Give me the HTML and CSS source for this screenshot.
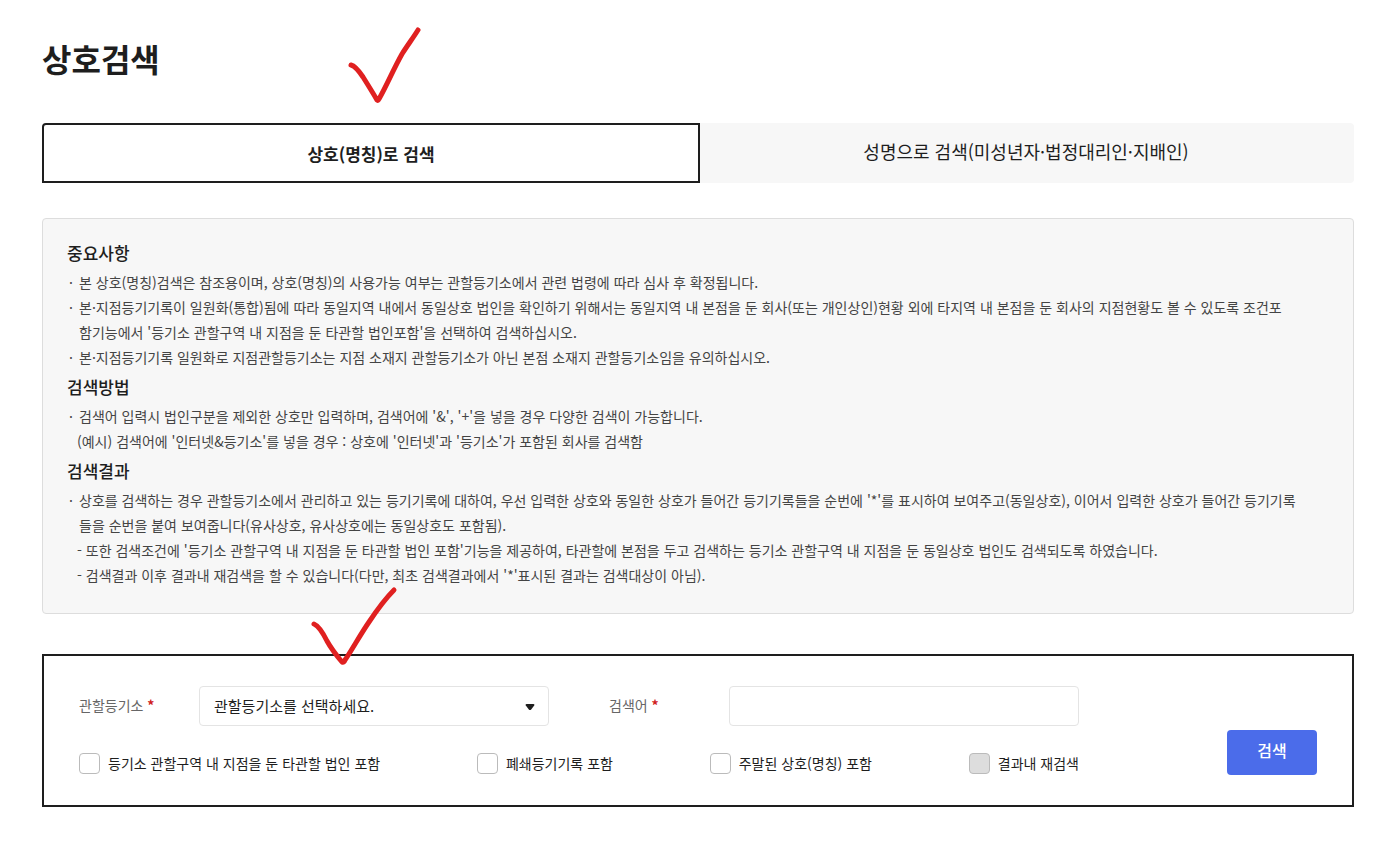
FILE: index.html
```html
<!DOCTYPE html>
<html lang="ko">
<head>
    <meta charset="UTF-8">
    <meta name="viewport" content="width=device-width, initial-scale=1.0">
    <title>상호검색</title>
    <link rel="stylesheet" href="styles.css">
</head>
<body>
    <main class="container">
        <h1>상호검색</h1>

        <div class="tabs">
            <button type="button" class="tab active">상호(명칭)로 검색</button>
            <button type="button" class="tab">성명으로 검색(미성년자·법정대리인·지배인)</button>
            <svg class="mark mark-tab" width="80" height="84" viewBox="0 0 80 84" aria-hidden="true">
                <path d="M6 40 C10 41 14 46 18 52 C23 60 28 68 32 75 Q33 76 34 74 C42 60 48 45 57 29 C62 21 68 13 73 5"/>
            </svg>
        </div>

        <section class="notice">
            <h2>중요사항</h2>
            <ul>
                <li>본 상호(명칭)검색은 참조용이며, 상호(명칭)의 사용가능 여부는 관할등기소에서 관련 법령에 따라 심사 후 확정됩니다.</li>
                <li>본·지점등기기록이 일원화(통합)됨에 따라 동일지역 내에서 동일상호 법인을 확인하기 위해서는 동일지역 내 본점을 둔 회사(또는 개인상인)현황 외에 타지역 내 본점을 둔 회사의 지점현황도 볼 수 있도록 조건포<br>함기능에서 '등기소 관할구역 내 지점을 둔 타관할 법인포함'을 선택하여 검색하십시오.</li>
                <li>본·지점등기기록 일원화로 지점관할등기소는 지점 소재지 관할등기소가 아닌 본점 소재지 관할등기소임을 유의하십시오.</li>
            </ul>
            <h2>검색방법</h2>
            <ul>
                <li>검색어 입력시 법인구분을 제외한 상호만 입력하며, 검색어에 '&amp;', '+'을 넣을 경우 다양한 검색이 가능합니다.</li>
                <li class="sub">(예시) 검색어에 '인터넷&amp;등기소'를 넣을 경우 : 상호에 '인터넷'과 '등기소'가 포함된 회사를 검색함</li>
            </ul>
            <h2>검색결과</h2>
            <ul>
                <li>상호를 검색하는 경우 관할등기소에서 관리하고 있는 등기기록에 대하여, 우선 입력한 상호와 동일한 상호가 들어간 등기기록들을 순번에 '*'를 표시하여 보여주고(동일상호), 이어서 입력한 상호가 들어간 등기기록<br>들을 순번을 붙여 보여줍니다(유사상호, 유사상호에는 동일상호도 포함됨).</li>
                <li class="sub">- 또한 검색조건에 '등기소 관할구역 내 지점을 둔 타관할 법인 포함'기능을 제공하여, 타관할에 본점을 두고 검색하는 등기소 관할구역 내 지점을 둔 동일상호 법인도 검색되도록 하였습니다.</li>
                <li class="sub">- 검색결과 이후 결과내 재검색을 할 수 있습니다(다만, 최초 검색결과에서 '*'표시된 결과는 검색대상이 아님).</li>
            </ul>
        </section>

        <form class="search-box">
            <div class="search-fields">
                <div class="field-row">
                    <div class="field">
                        <label for="office">관할등기소 <span class="required">*</span></label>
                        <div class="select-wrap">
                            <select id="office" name="office">
                                <option value="">관할등기소를 선택하세요.</option>
                            </select>
                            <svg class="arrow" width="10" height="8" viewBox="0 0 10 8" aria-hidden="true">
                                <path d="M1.500 1h7q1.500.3.700 1.500L6.200 6.500q-1.200 1-2.400 0L.8 2.500Q0 1.300 1.500 1z"/>
                            </svg>
                        </div>
                    </div>
                    <div class="field">
                        <label for="keyword">검색어 <span class="required">*</span></label>
                        <input type="text" id="keyword" name="keyword">
                    </div>
                </div>
                <div class="check-row">
                    <label class="check"><input type="checkbox" name="branch">등기소 관할구역 내 지점을 둔 타관할 법인 포함</label>
                    <label class="check"><input type="checkbox" name="closed">폐쇄등기기록 포함</label>
                    <label class="check"><input type="checkbox" name="cancelled">주말된 상호(명칭) 포함</label>
                    <label class="check"><input type="checkbox" name="within" disabled>결과내 재검색</label>
                </div>
            </div>
            <button type="submit" class="search-btn">검색</button>
            <svg class="mark mark-form" width="94" height="84" viewBox="0 0 94 84" aria-hidden="true">
                <path d="M6 39 C11 41 15 48 19 56 C24 65 29 71 34 77 Q36 78 37 75 C44 65 52 50 61 37 C69 25 77 14 86 5"/>
            </svg>
        </form>
    </main>
</body>
</html>
```
FILE: styles.css
```css
* {
    box-sizing: border-box;
}
body {
    margin: 0;
    background-color: #fff;
    color: #1e1e1e;
    font-family: "Noto Sans CJK KR", sans-serif;
    font-size: 14px;
}
button,
input,
select {
    font-family: inherit;
    color: inherit;
}
.container {
    padding: 34px 45px 45px 42px;
}
h1 {
    margin: 0 0 41px;
    font-size: 32px;
    line-height: 48px;
    font-weight: 700;
}

/* Tabs */
.tabs {
    position: relative;
    display: grid;
    grid-template-columns: 1fr 1fr;
    margin-bottom: 35px;
}
.tab {
    height: 60px;
    padding: 0 0 4px;
    border: 0;
    border-radius: 0 4px 4px 0;
    background-color: #f7f7f7;
    font-size: 18px;
    cursor: pointer;
}
.tab.active {
    margin-right: -2px;
    padding: 0;
    border: 2px solid #1e1e1e;
    border-radius: 4px 0 0 0;
    background-color: #fff;
    font-size: 17px;
    font-weight: 700;
    z-index: 1;
}

/* Notice */
.notice {
    margin-bottom: 40px;
    padding: 17px 24px 25px;
    border: 1px solid #ddd;
    border-radius: 4px;
    background-color: #f7f7f7;
}
.notice h2 {
    margin: 0;
    font-size: 17px;
    line-height: 34px;
    font-weight: 500;
}
.notice ul {
    margin: 0;
    padding: 0;
    list-style: none;
    color: #444;
    line-height: 25px;
}
.notice li {
    padding-left: 12px;
    text-indent: -10px;
}
.notice li::before {
    content: "·";
    display: inline-block;
    width: 10px;
    text-indent: 0;
}
.notice .sub {
    padding-left: 10px;
    text-indent: 0;
}
.notice .sub::before {
    display: none;
}

/* Search form */
.search-box {
    position: relative;
    display: flex;
    justify-content: space-between;
    padding: 30px 35px;
    border: 2px solid #1e1e1e;
}
.search-fields {
    flex: 0 1 1000px;
}
.field-row {
    display: grid;
    grid-template-columns: 1fr 1fr;
    gap: 60px;
    margin-bottom: 25px;
}
.field {
    display: grid;
    grid-template-columns: 120px 1fr;
    align-items: center;
}
.field label {
    padding-bottom: 2px;
    color: #666;
}
.required {
    color: #d02020;
    font-weight: 700;
}
.select-wrap {
    position: relative;
}
.field select,
.field input {
    width: 100%;
    height: 40px;
    padding: 0 14px 2px;
    border: 1px solid #e4e4e4;
    border-radius: 4px;
    background-color: #fff;
    font-size: 15px;
}
.field select {
    display: block;
    appearance: none;
}
.arrow {
    position: absolute;
    top: 17px;
    right: 14px;
    fill: #1e1e1e;
    pointer-events: none;
}
.check-row {
    display: flex;
    justify-content: space-between;
}
.check {
    display: flex;
    align-items: center;
    gap: 8px;
    line-height: 24px;
}
.check input {
    appearance: none;
    width: 21px;
    height: 21px;
    margin: 0;
    border: 1px solid #bbb;
    border-radius: 4px;
    background-color: #fff;
}
.check input:checked {
    background-color: #4b6cea;
}
.check input:disabled {
    background-color: #ddd;
}
.search-btn {
    align-self: flex-end;
    width: 90px;
    height: 45px;
    padding: 0 0 6px;
    border: 0;
    border-radius: 4px;
    background-color: #4b6cea;
    color: #fff;
    font-size: 16px;
    font-weight: 500;
    cursor: pointer;
}

/* Hand-drawn check marks */
.mark {
    position: absolute;
    z-index: 2;
    fill: none;
    stroke: #e02020;
    stroke-width: 5;
    stroke-linecap: round;
    stroke-linejoin: round;
    pointer-events: none;
}
.mark-tab {
    top: -98px;
    left: 303px;
}
.mark-form {
    top: -71px;
    left: 264px;
}
```
